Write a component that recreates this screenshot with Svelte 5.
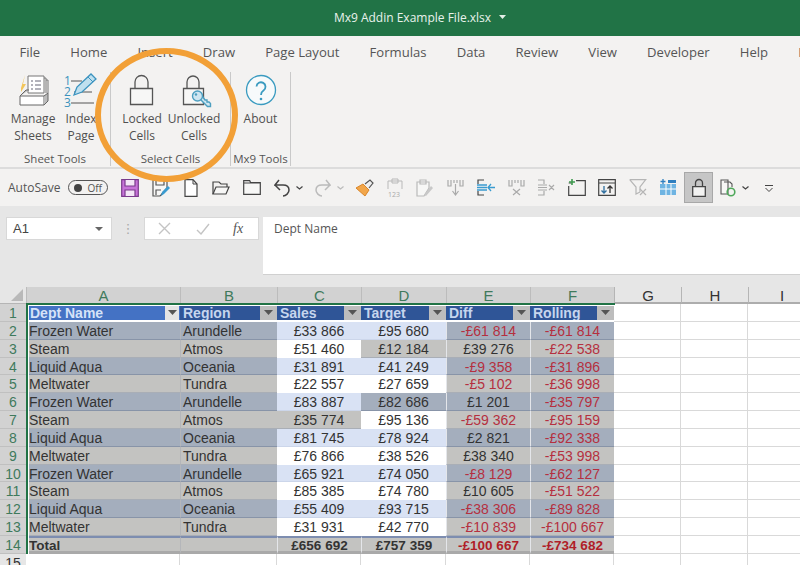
<script>
  const tabs = ["File", "Home", "Insert", "Draw", "Page Layout", "Formulas", "Data", "Review", "View", "Developer", "Help", "Mx9"];
  const cols = ["A", "B", "C", "D", "E", "F"];
  const rows = [
    ["Frozen Water", "Arundelle", "£33 866", "£95 680", "-£61 814", "-£61 814"],
    ["Steam", "Atmos", "£51 460", "£12 184", "£39 276", "-£22 538"],
    ["Liquid Aqua", "Oceania", "£31 891", "£41 249", "-£9 358", "-£31 896"],
    ["Meltwater", "Tundra", "£22 557", "£27 659", "-£5 102", "-£36 998"],
    ["Frozen Water", "Arundelle", "£83 887", "£82 686", "£1 201", "-£35 797"],
    ["Steam", "Atmos", "£35 774", "£95 136", "-£59 362", "-£95 159"],
    ["Liquid Aqua", "Oceania", "£81 745", "£78 924", "£2 821", "-£92 338"],
    ["Meltwater", "Tundra", "£76 866", "£38 526", "£38 340", "-£53 998"],
    ["Frozen Water", "Arundelle", "£65 921", "£74 050", "-£8 129", "-£62 127"],
    ["Steam", "Atmos", "£85 385", "£74 780", "£10 605", "-£51 522"],
    ["Liquid Aqua", "Oceania", "£55 409", "£93 715", "-£38 306", "-£89 828"],
    ["Meltwater", "Tundra", "£31 931", "£42 770", "-£10 839", "-£100 667"],
  ];
  const total = ["£656 692", "£757 359", "-£100 667", "-£734 682"];
  const heads = ["Dept Name", "Region", "Sales", "Target", "Diff", "Rolling"];

  // locked cells in the editable C:D block, shown shaded
  const locked = { "1-3": true, "4-3": true, "5-2": true };

  function cellClass(r, c) {
    const dark = r % 2 === 0;
    if (c < 2 || c > 3 || locked[r + "-" + c]) return dark ? "dark" : "grey";
    return dark ? "pale" : "plain";
  }
</script>

<div class="app">
  <header class="title">
    <span>Mx9 Addin Example File.xlsx</span>
    <svg width="7" height="4" viewBox="0 0 7 4"><path d="M0 0h7L3.500 4z" fill="#e4efe8" /></svg>
  </header>

  <nav class="tabs">
    {#each tabs as t}<span class="tab">{t}</span>{/each}
  </nav>

  <section class="ribbon">
    <div class="group g1">
      <div class="btns">
        <div class="rbtn">
          <svg width="34" height="34" viewBox="0 0 34 34" fill="none">
            <path d="M5 16 9 3 7 12h3L5 20z" fill="#f3c65a" />
            <path d="M12 4h16v17H12z" fill="#fff" stroke="#777" />
            <path d="M28 6h2v15M30 8h2v13" stroke="#777" />
            <path d="M15 9h2M19 9h6M15 13h2M19 13h6M15 17h2M19 17h6" stroke="#667" />
            <path d="M4 24h24v9H4z" fill="#fff" stroke="#666" />
            <path d="M4 24l6-6h3M28 24l4-3v8l-4 4" stroke="#666" fill="#bbb" />
          </svg>
          <span>Manage<br />Sheets</span>
        </div>
        <div class="rbtn">
          <svg class="free" width="34" height="34" viewBox="0 0 34 34" fill="none">
            <text class="idx"><tspan x="0" y="13">1</tspan><tspan x="0" y="24">2</tspan><tspan x="0" y="35">3</tspan></text>
            <path d="M7 9h11M10 20h18M7 31h23" stroke="#555" />
            <path d="M10 23 13 15 27 2l5 5-14 13z" fill="#bfe0ef" stroke="#3b93bf" stroke-width="1.300" />
            <path d="M24 5l5 5" stroke="#3b93bf" />
          </svg>
          <span>Index<br />Page</span>
        </div>
      </div>
      <div class="glabel">Sheet Tools</div>
    </div>

    <div class="group g2">
      <div class="btns">
        <div class="rbtn">
          <svg width="34" height="34" viewBox="0 0 34 34" fill="none">
            <path d="M10 16V10a6.500 6.500 0 0 1 13 0v6" stroke="#555" stroke-width="1.300" />
            <path d="M5.500 16.500h22v16h-22z" fill="#f7f7f6" stroke="#555" stroke-width="1.300" />
          </svg>
          <span>Locked<br />Cells</span>
        </div>
        <div class="rbtn">
          <svg class="free" width="34" height="34" viewBox="0 0 34 34" fill="none">
            <path d="M10 16V10a6 6 0 0 1 12 0v6" stroke="#555" stroke-width="1.300" />
            <path d="M6.500 16.500h20v16h-20z" fill="#f7f7f6" stroke="#555" stroke-width="1.300" />
            <path d="M23 27l7.500 7.500h3v-3l-1.500-1.500h-2v-2h-2l-2.500-3.500" fill="#cfe6f1" stroke="#4d9fc0" stroke-width="1.400" />
            <circle cx="20.500" cy="24" r="5" fill="#cfe6f1" stroke="#4d9fc0" stroke-width="1.400" />
            <circle cx="19" cy="22.500" r="1.200" fill="#4d9fc0" />
          </svg>
          <span>Unlocked<br />Cells</span>
        </div>
      </div>
      <div class="glabel">Select Cells</div>
    </div>

    <div class="group g3">
      <div class="btns">
        <div class="rbtn">
          <svg width="34" height="34" viewBox="0 0 34 34" fill="none">
            <circle cx="17" cy="18" r="14.500" stroke="#3a9bc0" stroke-width="1.300" fill="#f7fafb" />
            <path d="M12.500 14.500a4.500 4.500 0 1 1 7 4c-2 1.300-2.500 2.300-2.500 4.500" stroke="#3a9bc0" stroke-width="1.800" />
            <circle cx="17" cy="27" r="1.300" fill="#3a9bc0" />
          </svg>
          <span>About</span>
        </div>
      </div>
      <div class="glabel">Mx9 Tools</div>
    </div>
  </section>

  <section class="qat">
    <span class="autosave">AutoSave</span>
    <span class="toggle"><i></i>Off</span>
    <div class="q">
      <svg width="18" height="18" viewBox="0 0 18 18" fill="none">
        <path d="M.7.700h16.600v16.600H.7z" fill="#c773d8" stroke="#7a3b8c" stroke-width="1.200" />
        <path d="M4 1v6h10V1M4 17v-6h10v6" fill="#f4e6f7" stroke="#7a3b8c" stroke-width="1.200" />
      </svg>
    </div>
    <div class="q">
      <svg width="18" height="18" viewBox="0 0 18 18" fill="none">
        <path d="M1 1h14v8l-6 7 -1 1H1z" fill="#f7f7f6" stroke="#555" stroke-width="1.200" />
        <path d="M4 1v5h8V1M4 16v-5h5" stroke="#555" stroke-width="1.200" />
        <path d="M9 17l1-4 6-6 2 2-6 6z" fill="#3a9bd0" />
      </svg>
    </div>
    <div class="q">
      <svg width="14" height="18" viewBox="0 0 14 18" fill="none">
        <path d="M1 .700h8l4 4.300v12.300H1z" fill="#fff" stroke="#444" stroke-width="1.200" />
        <path d="M9 1v4h4" stroke="#444" />
      </svg>
    </div>
    <div class="q">
      <svg width="18" height="14" viewBox="0 0 18 14" fill="none">
        <path d="M1 13V1h6l2 2h6v3" stroke="#444" stroke-width="1.200" />
        <path d="M1 13l3-7h13l-3 7z" fill="#f7f7f6" stroke="#444" stroke-width="1.200" />
      </svg>
    </div>
    <div class="q">
      <svg width="18" height="15" viewBox="0 0 18 15" fill="none">
        <path d="M.7 14.300V.700h6l1 2h9.600v11.600zM.7 3h16" fill="#f7f7f6" stroke="#444" stroke-width="1.200" />
      </svg>
    </div>
    <div class="q wide">
      <svg width="16" height="18" viewBox="0 0 16 18" fill="none">
        <path d="M5 1 1 6h8c4 0 6 2 6 5 0 3-3 6-6 6" stroke="#444" stroke-width="1.500" />
        <path d="M1 6l5 5" stroke="#444" stroke-width="1.500" />
      </svg>
      <svg class="car" width="7" height="4" viewBox="0 0 7 4"><path d="M.5.500 3.500 3 6.500.500" fill="none" stroke="#444" stroke-width="1.200" /></svg>
    </div>
    <div class="q wide">
      <svg width="16" height="18" viewBox="0 0 16 18" fill="none">
        <path d="M11 1l4 5H7C3 6 1 8 1 11c0 3 3 6 6 6M15 6l-5 5" stroke="#bbb" stroke-width="1.500" />
      </svg>
      <svg class="car" width="7" height="4" viewBox="0 0 7 4"><path d="M.5.500 3.500 3 6.500.500" fill="none" stroke="#bbb" stroke-width="1.200" /></svg>
    </div>
    <div class="q">
      <svg width="19" height="18" viewBox="0 0 19 18" fill="none">
        <path d="M1 9l7-4 6 6-4 6z" fill="#f2a64a" stroke="#d9862a" />
        <path d="M10 5l5-4 3 3-4 5" fill="#eee" stroke="#555" stroke-width="1.200" />
      </svg>
    </div>
    <div class="q">
      <svg width="16" height="20" viewBox="0 0 16 20" fill="none">
        <path d="M1 3h14v8M1 3v8M5 1h6v4H5z" stroke="#b9b9b9" />
        <text x="1" y="19" class="tiny">123</text>
      </svg>
    </div>
    <div class="q">
      <svg width="17" height="18" viewBox="0 0 17 18" fill="none">
        <path d="M1 3h12v6l-5 8H1zM4 1h6v4H4z" fill="#f7f7f6" stroke="#b9b9b9" stroke-width="1.200" />
        <path d="M8 16l7-9 2 2-7 8z" fill="#c8c8c8" />
      </svg>
    </div>
    <div class="q">
      <svg width="17" height="17" viewBox="0 0 17 17" fill="none">
        <path d="M1 1v6h3V1M13 1v6h3V1M7 1v3M10 1v3" stroke="#aaa" stroke-width="1.200" />
        <path d="M8.500 5v11M5.500 12l3 4 3-4" stroke="#aaa" stroke-width="1.200" />
      </svg>
    </div>
    <div class="q">
      <svg width="18" height="17" viewBox="0 0 18 17" fill="none">
        <path d="M7 1H1v4M7 16H1v-4" stroke="#444" stroke-width="1.200" />
        <path d="M0 6h10M0 8.500h10M0 11h10" stroke="#3a9bd0" stroke-width="1.500" />
        <path d="M18 8.500h-7M14 5l-3 3.500 3 3.500" stroke="#3a9bd0" stroke-width="1.300" />
      </svg>
    </div>
    <div class="q">
      <svg width="17" height="17" viewBox="0 0 17 17" fill="none">
        <path d="M1 1v6h3V1M13 1v6h3V1M7 1v3M10 1v3" stroke="#aaa" stroke-width="1.200" />
        <path d="M5 10l7 6M12 10l-7 6" stroke="#aaa" stroke-width="1.200" />
      </svg>
    </div>
    <div class="q">
      <svg width="18" height="17" viewBox="0 0 18 17" fill="none">
        <path d="M1 1h6v4M1 16h6v-4" stroke="#aaa" stroke-width="1.200" />
        <path d="M1 6h9M1 8.500h9M1 11h9M12 6l5 5M17 6l-5 5" stroke="#aaa" stroke-width="1.200" />
      </svg>
    </div>
    <div class="q">
      <svg width="18" height="17" viewBox="0 0 18 17" fill="none">
        <path d="M.7 4h3M8 1.600h9.300v14.700H.7V7" stroke="#444" stroke-width="1.200" />
        <path d="M4 0v6M1 3h6" stroke="#3f9a4f" stroke-width="1.600" />
      </svg>
    </div>
    <div class="q">
      <svg width="18" height="17" viewBox="0 0 18 17" fill="none">
        <path d="M.7.700h16.600v15.600H.7zM.7 4h16.600" stroke="#444" stroke-width="1.200" />
        <path d="M6 7v7M3.500 11.500 6 14l2.500-2.500" stroke="#2f6f9f" stroke-width="1.300" />
        <path d="M12 14V7M9.500 9.500 12 7l2.500 2.500" stroke="#333" stroke-width="1.300" />
      </svg>
    </div>
    <div class="q">
      <svg width="18" height="17" viewBox="0 0 18 17" fill="none">
        <path d="M.7.700h16L11 8v5M.7.700 7 8v7l4-2" stroke="#b5b5b5" stroke-width="1.200" />
        <path d="M11 10l6 6M17 10l-6 6" stroke="#b5b5b5" stroke-width="1.200" />
      </svg>
    </div>
    <div class="q">
      <svg width="18" height="17" viewBox="0 0 18 17" fill="none">
        <path d="M1 5h16v11H1z" fill="#6fb4e2" />
        <path d="M1 10h16M7 5v11M12 5v11" stroke="#fff" />
        <path d="M9 1h8v3H9z" fill="#2f7fc0" />
        <path d="M4 0v5M1.500 2.500h5" stroke="#2f7fc0" stroke-width="1.300" />
      </svg>
    </div>
    <div class="q lockbtn">
      <svg width="14" height="19" viewBox="0 0 14 19" fill="none">
        <path d="M3.500 9V5a3.500 3.500 0 0 1 7 0v4" stroke="#444" stroke-width="1.300" />
        <path d="M.7 8.700h12.600v9.600H.7z" fill="#f2f2f1" stroke="#444" stroke-width="1.300" />
      </svg>
    </div>
    <div class="q wide">
      <svg width="16" height="18" viewBox="0 0 16 18" fill="none">
        <path d="M1 1h7v14H1zM4 3h6l2 2v3" stroke="#555" stroke-width="1.100" fill="#f7f7f6" />
        <circle cx="11" cy="13" r="3.800" stroke="#4fa85a" stroke-width="1.600" />
      </svg>
      <svg class="car" width="7" height="4" viewBox="0 0 7 4"><path d="M.5.500 3.500 3 6.500.500" fill="none" stroke="#444" stroke-width="1.200" /></svg>
    </div>
    <div class="more">
      <svg width="8" height="7" viewBox="0 0 8 7" fill="none"><path d="M0 .5h8M.5 3 4 6.500 7.500 3" stroke="#444" /></svg>
    </div>
  </section>

  <section class="formula">
    <div class="namebox">
      <span>A1</span>
      <svg width="8" height="4" viewBox="0 0 8 4"><path d="M0 0h8L4 4z" fill="#666" /></svg>
    </div>
    <div class="dots">⋮</div>
    <div class="fxbox">
      <svg width="13" height="13" viewBox="0 0 13 13" fill="none"><path d="M1 1l11 11M12 1 1 12" stroke="#c4c4c4" stroke-width="1.400" /></svg>
      <svg width="14" height="12" viewBox="0 0 14 12" fill="none"><path d="M1 7l4 4 8-10" stroke="#c4c4c4" stroke-width="1.400" /></svg>
      <i>fx</i>
    </div>
    <div class="fbar">Dept Name</div>
  </section>

  <section class="sheet">
    <div class="corner"><svg width="12" height="12" viewBox="0 0 12 12"><path d="M12 0v12H0z" fill="#b9b9b9" /></svg></div>
    {#each cols as c}<div class="colhead sel">{c}</div>{/each}
    <div class="colhead">G</div>
    <div class="colhead">H</div>
    <div class="colhead">I</div>

    <div class="rowhead">1</div>
    {#each heads as h, i}
      <div class="hcell" class:first={i === 0}>
        <span>{h}</span>
        <b class="filter"><svg width="9" height="5" viewBox="0 0 9 5"><path d="M0 0h9L4.500 5z" fill="#555" /></svg></b>
      </div>
    {/each}
    <div class="blank"></div><div class="blank"></div><div class="blank"></div>

    {#each rows as row, r}
      <div class="rowhead">{r + 2}</div>
      {#each row as v, c}
        <div class="cell {cellClass(r, c)}" class:colA={c === 0} class:colB={c === 1} class:num={c > 1} class:neg={v.startsWith("-")} class:block={c === 4 || c === 5}>{v}</div>
      {/each}
      <div class="blank"></div><div class="blank"></div><div class="blank"></div>
    {/each}

    <div class="rowhead">14</div>
    <div class="cell grey tot colA">Total</div>
    <div class="cell grey tot colB"></div>
    {#each total as v}
      <div class="cell grey tot num block" class:neg={v.startsWith("-")}>{v}</div>
    {/each}
    <div class="blank"></div><div class="blank"></div><div class="blank"></div>

    <div class="rowhead plainhead">15</div>
    {#each Array(9) as _}<div class="blank"></div>{/each}

    <div class="selection"></div>
  </section>

  <div class="ring"></div>
</div>

<style>
  :global(body) {
    margin: 0;
    background: #fff;
  }

  .app {
    position: relative;
    width: 800px;
    height: 565px;
    overflow: hidden;
    font-family: "Open Sans", "Noto Sans", sans-serif;
    color: #444;
  }

  .title {
    height: 36px;
    background: #217346;
    color: #e9f2ec;
    font-size: 12px;
    display: flex;
    align-items: center;
    justify-content: center;
    gap: 8px;
    padding: 0 0 2px 40px;
    box-sizing: border-box;
  }

  .tabs {
    height: 31px;
    background: #f3f2f1;
    display: flex;
    align-items: center;
    gap: 30.100px;
    padding: 0 0 0 19.500px;
    box-sizing: border-box;
    font-size: 13.100px;
    color: #555;
    white-space: nowrap;
    overflow: hidden;
  }

  .ribbon {
    height: 102px;
    background: #f3f2f1;
    border-bottom: 2px solid #dcdcdc;
    display: flex;
    box-sizing: border-box;
    padding-top: 5px;
  }

  .group {
    height: 94px;
    border-right: 1px solid #c9c9c9;
    display: flex;
    flex-direction: column;
    box-sizing: border-box;
  }

  .g1 { width: 111px; padding-left: 9px; }
  .g2 { width: 120px; padding-left: 5px; }
  .g3 { width: 60px; }

  .btns {
    display: flex;
    flex: 1;
  }

  .rbtn {
    width: 50px;
    display: flex;
    flex-direction: column;
    align-items: center;
    font-size: 12px;
    line-height: 17px;
    text-align: center;
    color: #505050;
  }

  .g1 .rbtn { width: 48px; }
  .g2 .rbtn { width: 52px; }
  .g3 .rbtn { width: 60px; }

  .rbtn svg {
    margin-bottom: 4px;
    flex: none;
  }

  .free {
    overflow: visible;
  }

  .glabel {
    font-size: 11.500px;
    text-align: center;
    line-height: 14px;
    color: #555;
  }

  .g1 .glabel { margin-left: -9px; }
  .g2 .glabel { margin-left: -5px; }

  .idx {
    font: 12px "Open Sans", sans-serif;
    fill: #3a93bd;
  }

  .tiny {
    font: 7px "Open Sans", sans-serif;
    fill: #aaa;
  }

  .qat {
    height: 37px;
    background: #f3f2f1;
    display: flex;
    align-items: center;
    box-sizing: border-box;
    padding-left: 8px;
  }

  .autosave {
    font-size: 12px;
    width: 60px;
    color: #555;
  }

  .toggle {
    width: 40px;
    height: 15px;
    border: 1.300px solid #555;
    border-radius: 9px;
    box-sizing: border-box;
    margin-right: 7px;
    display: flex;
    align-items: center;
    justify-content: flex-end;
    padding-right: 5px;
    font-size: 10px;
    color: #555;
    position: relative;
  }

  .toggle i {
    position: absolute;
    left: 5px;
    top: 2.500px;
    width: 8px;
    height: 8px;
    background: #444;
    border-radius: 50%;
  }

  .q {
    width: 30.400px;
    height: 28px;
    flex: none;
    display: flex;
    align-items: center;
    justify-content: center;
  }

  .q.wide {
    width: 41px;
    justify-content: flex-start;
    padding-left: 7px;
    box-sizing: border-box;
  }

  .car {
    margin-left: 6px;
  }

  .lockbtn {
    width: 29px;
    height: 31px;
    margin-left: 1px;
    background: #c6c6c6;
    border: 1px solid #a8a8a8;
    box-sizing: border-box;
  }

  .more {
    margin-left: 3px;
    width: 24px;
    text-align: center;
    line-height: 7px;
  }

  .formula {
    height: 81px;
    background: #e6e6e6;
    display: flex;
    align-items: flex-start;
    padding: 11px 0 0 6px;
    box-sizing: border-box;
    font-family: "Liberation Sans", Arial, sans-serif;
  }

  .namebox {
    width: 106px;
    height: 23px;
    background: #fff;
    border: 1px solid #d8d8d8;
    box-sizing: border-box;
    display: flex;
    align-items: center;
    justify-content: space-between;
    padding: 0 8px 0 6px;
    font-size: 13px;
    color: #444;
  }

  .dots {
    width: 32px;
    height: 23px;
    line-height: 23px;
    text-align: center;
    color: #aaa;
    font-size: 13px;
    font-family: "DejaVu Sans", sans-serif;
  }

  .fxbox {
    width: 115px;
    height: 23px;
    background: #fff;
    border: 1px solid #d8d8d8;
    box-sizing: border-box;
    display: flex;
    align-items: center;
    gap: 25px;
    padding-left: 13px;
  }

  .fxbox i {
    font-family: "Liberation Serif", serif;
    font-size: 14px;
    color: #555;
    margin-left: -2px;
  }

  .fbar {
    margin-left: 4px;
    flex: 1;
    height: 58px;
    background: #fff;
    border-bottom: 1px solid #d0d0d0;
    padding: 3px 11px;
    box-sizing: border-box;
    font-family: "Open Sans", sans-serif;
    font-size: 12px;
    color: #555;
  }

  .sheet {
    position: relative;
    display: grid;
    grid-template-columns: 26px 154px 97px 84px 85px 84px 84px 67px 67px 67px;
    grid-template-rows: 17px repeat(15, 17.850px);
    font-family: "Liberation Sans", Arial, sans-serif;
    font-size: 14px;
    color: #333;
    height: 278px;
    overflow: hidden;
  }

  .corner {
    background: #e6e6e6;
    display: flex;
    align-items: flex-end;
    justify-content: flex-end;
    padding: 0 3px 2px 0;
    box-sizing: border-box;
    border-bottom: 1px solid #b5b5b5;
  }

  .colhead {
    background: #e6e6e6;
    border-left: 1px solid #b5b5b5;
    border-bottom: 2px solid #adadad;
    box-sizing: border-box;
    text-align: center;
    line-height: 17px;
    font-size: 15px;
    color: #333;
  }

  .colhead.sel {
    background: #d2d2d2;
    color: #3f7a5c;
    border-left-color: #bcbcbc;
    border-bottom: 0;
  }

  .rowhead {
    background: #d2d2d2;
    color: #3f7a5c;
    text-align: center;
    line-height: 19px;
    border-bottom: 1px solid #c0c0c0;
    box-sizing: border-box;
  }

  .plainhead {
    background: #e6e6e6;
    color: #333;
  }

  .blank {
    border-right: 1px solid #d9d9d9;
    border-bottom: 1px solid #d9d9d9;
    box-sizing: border-box;
    background: #fff;
  }

  .hcell {
    background: #2f5597;
    color: #c6d6ee;
    font-weight: 700;
    display: flex;
    align-items: center;
    justify-content: space-between;
    padding-left: 3px;
    margin: 2px 0 2px 0;
    box-sizing: border-box;
    overflow: hidden;
  }

  .hcell.first {
    background: #4472c4;
    color: #d6e3f8;
    margin-left: 3px;
    padding-left: 1px;
  }

  .filter {
    width: 17px;
    height: 100%;
    background: #bdbdbd;
    display: flex;
    align-items: center;
    justify-content: center;
  }

  .first .filter {
    width: 14px;
    background: #e4e4e4;
    margin-right: 1px;
  }

  .cell {
    padding: 0 3px;
    line-height: 19px;
    box-sizing: border-box;
    white-space: nowrap;
    overflow: hidden;
    border-bottom: 1px solid transparent;
  }

  .colA {
    margin-left: 3px;
    padding-left: 0;
  }

  .colB {
    border-left: 1px solid #b4b6ba;
    padding-left: 2px;
  }

  .cell.num {
    text-align: center;
  }

  .dark {
    background: #a4aebd;
    border-bottom-color: #8894a8;
  }

  .grey {
    background: #c3c3c1;
    border-bottom-color: #a9aeb6;
  }

  .pale {
    background: #d9e2f4;
    border-bottom-color: #ccd6ea;
  }

  .plain {
    background: #fff;
  }

  .neg {
    color: #b5303f;
  }

  .block {
    border-left: 1px solid #e4e6ea;
  }

  .cell.tot {
    font-weight: 700;
    font-size: 13.500px;
    border-top: 2px solid #7d8db0;
    border-bottom: 3px solid #a9a9a9;
    line-height: 15px;
  }

  .tot.neg {
    color: #b01e28;
  }

  .selection {
    position: absolute;
    left: 26px;
    top: 16px;
    width: 589px;
    height: 251px;
    border-top: 2px solid #217346;
    border-left: 2px solid #217346;
    box-sizing: border-box;
    pointer-events: none;
  }

  .ring {
    position: absolute;
    left: 95px;
    top: 48px;
    width: 143px;
    height: 134px;
    border: 6px solid #f2a037;
    border-radius: 50%;
    box-sizing: border-box;
  }
</style>
